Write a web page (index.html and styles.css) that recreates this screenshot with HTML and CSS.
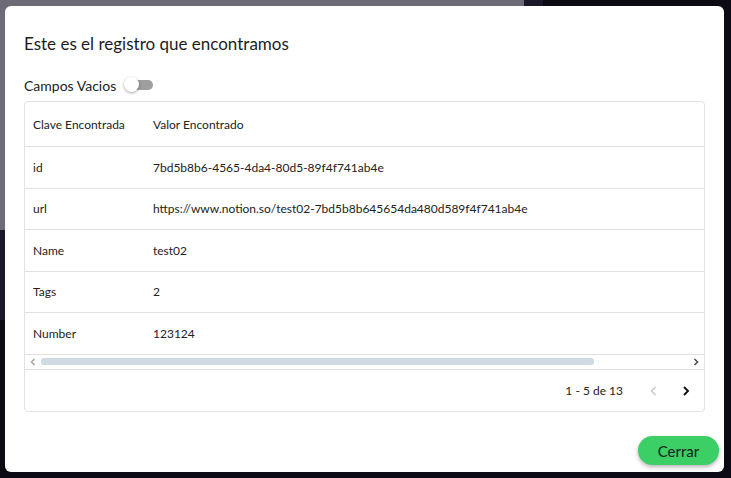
FILE: index.html
```html
<!DOCTYPE html>
<html lang="es">
<head>
    <meta charset="UTF-8">
    <meta name="viewport" content="width=device-width, initial-scale=1.0">
    <title>Registro encontrado</title>
    <link rel="stylesheet" href="styles.css">
</head>
<body>
    <div class="backdrop">
        <div class="bg-left"></div>
        <div class="bg-strip"></div>
        <div class="bg-dark"></div>
    </div>

    <div class="modal">
        <h2 class="modal-title">Este es el registro que encontramos</h2>

        <div class="empty-toggle">
            <span>Campos Vacios</span>
            <span class="switch"><span class="knob"></span></span>
        </div>

        <div class="table-card">
            <table class="records">
                <thead>
                    <tr><th class="key-col">Clave Encontrada</th><th>Valor Encontrado</th></tr>
                </thead>
                <tbody>
                    <tr><td class="key-col">id</td><td>7bd5b8b6-4565-4da4-80d5-89f4f741ab4e</td></tr>
                    <tr><td class="key-col">url</td><td>https://www.notion.so/test02-7bd5b8b645654da480d589f4f741ab4e</td></tr>
                    <tr><td class="key-col">Name</td><td>test02</td></tr>
                    <tr><td class="key-col">Tags</td><td>2</td></tr>
                    <tr><td class="key-col">Number</td><td>123124</td></tr>
                </tbody>
            </table>

            <div class="hscroll">
                <svg class="scroll-arrow" width="8" height="8" viewBox="0 0 8 8"><path d="M5.5 1 L2.5 4 L5.5 7" fill="none" stroke="#a8a8a8" stroke-width="1.6"/></svg>
                <div class="scroll-track"><div class="scroll-thumb"></div></div>
                <svg class="scroll-arrow" width="8" height="8" viewBox="0 0 8 8"><path d="M2.5 1 L5.5 4 L2.5 7" fill="none" stroke="#505050" stroke-width="1.6"/></svg>
            </div>

            <div class="pager">
                <span class="pager-info">1 - 5 de 13</span>
                <button class="pager-btn" disabled>
                    <svg width="12" height="12" viewBox="0 0 12 12"><path d="M7.5 2 L3.5 6 L7.5 10" fill="none" stroke="#c4c4c4" stroke-width="1.3"/></svg>
                </button>
                <button class="pager-btn">
                    <svg width="12" height="12" viewBox="0 0 12 12"><path d="M4 2 L8 6 L4 10" fill="none" stroke="#111" stroke-width="1.9"/></svg>
                </button>
            </div>
        </div>

        <div class="modal-actions">
            <button class="close-btn">Cerrar</button>
        </div>
    </div>
</body>
</html>
```

FILE: styles.css
```css
body {
    margin: 0;
    font-family: 'Lato', 'Open Sans', sans-serif;
    background: #0c0b14;
    width: 731px;
    height: 478px;
    overflow: hidden;
    position: relative;
}

.backdrop {
    position: absolute;
    inset: 0;
}

.bg-left {
    position: absolute;
    left: 0;
    top: 0;
    width: 524px;
    height: 230px;
    background: #6d6b76;
}

.bg-strip {
    position: absolute;
    left: 0;
    top: 230px;
    width: 5px;
    height: 90px;
    background: #1b1929;
}

.bg-dark {
    position: absolute;
    left: 524px;
    top: 0;
    width: 19px;
    height: 6px;
    background: #1b1929;
}

.modal {
    position: absolute;
    left: 5px;
    top: 6px;
    width: 719px;
    height: 466px;
    box-sizing: border-box;
    background: #fff;
    border-radius: 6px;
    padding: 26px 19px 0 19px;
    color: #222;
}

.modal-title {
    margin: 0;
    font-size: 17px;
    font-weight: 400;
    line-height: 24px;
    color: #1c1c1c;
}

.empty-toggle {
    display: flex;
    align-items: center;
    gap: 8px;
    margin-top: 18px;
    height: 22px;
    font-size: 14px;
    color: #222;
}

.switch {
    position: relative;
    width: 25px;
    height: 10px;
    border-radius: 5px;
    background: #9e9e9e;
    margin-left: 4px;
}

.knob {
    position: absolute;
    left: -4px;
    top: -3px;
    width: 15px;
    height: 15px;
    border-radius: 50%;
    background: #fff;
    box-shadow: 0 1px 3px rgba(0,0,0,0.35);
}

.table-card {
    margin-top: 5px;
    border: 1px solid #e2e2e2;
    border-radius: 4px;
    height: 311px;
    box-sizing: border-box;
}

.records {
    width: 100%;
    border-collapse: collapse;
    font-size: 12px;
    color: #222;
}

.records th {
    height: 44px;
    font-weight: 400;
    text-align: left;
    padding: 0 8px;
    border-bottom: 1px solid #e2e2e2;
}

.records td {
    height: 40.5px;
    padding: 0 8px;
    border-bottom: 1px solid #e2e2e2;
    white-space: nowrap;
}

.records .key-col {
    width: 104px;
}

.hscroll {
    display: flex;
    align-items: center;
    gap: 4px;
    height: 14px;
    padding: 0 4px;
    border-bottom: 1px solid #e2e2e2;
}

.scroll-track {
    flex: 1;
}

.scroll-thumb {
    width: 553px;
    height: 7px;
    border-radius: 3px;
    background: #d0dae3;
}

.pager {
    display: flex;
    align-items: center;
    justify-content: flex-end;
    height: 42px;
    padding-right: 2px;
    font-size: 12px;
    color: #222;
}

.pager-info {
    margin-right: 15px;
}

.pager-btn {
    width: 32px;
    height: 32px;
    border: none;
    background: none;
    padding: 0;
    display: flex;
    align-items: center;
    justify-content: center;
    cursor: pointer;
}

.pager-btn:disabled {
    cursor: default;
}

.modal-actions {
    display: flex;
    justify-content: flex-end;
    margin-top: 24px;
    margin-right: -14px;
}

.close-btn {
    width: 81px;
    height: 29px;
    border: none;
    border-radius: 15px;
    background: #3bcf66;
    color: #1a1a1a;
    font-family: inherit;
    font-size: 15px;
    box-shadow: 0 2px 4px rgba(0,0,0,0.3);
    cursor: pointer;
}
```
